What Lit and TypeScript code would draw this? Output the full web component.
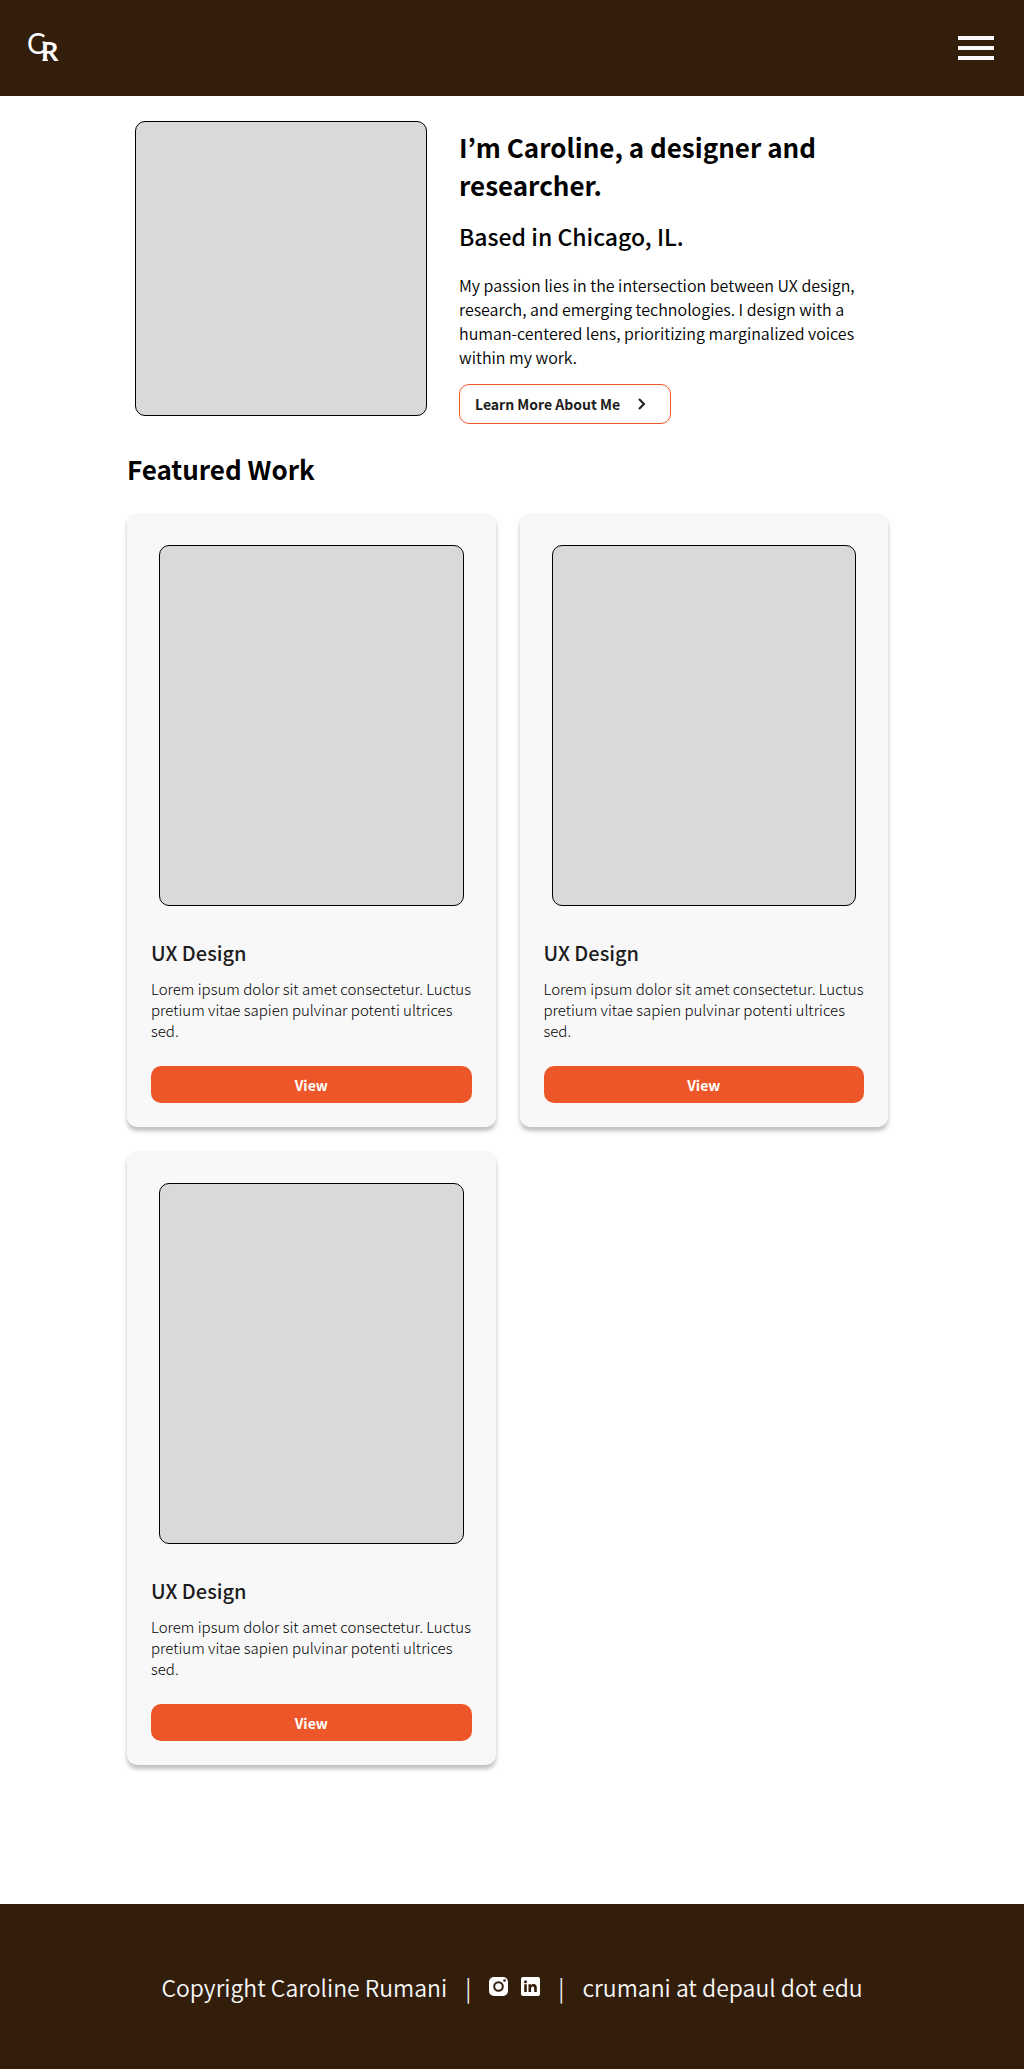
import { LitElement, html, css } from "lit";
import { customElement, property } from "lit/decorators.js";

@customElement("work-card")
class WorkCard extends LitElement {
  @property() heading = "";
  @property() summary = "";

  static styles = css`
    :host {
      display: block;
    }
    .card {
      display: flex;
      flex-direction: column;
      box-sizing: border-box;
      height: 100%;
      padding: 32px 24px 24px;
      background: #f8f8f8;
      border-radius: 10px;
      box-shadow: 0 4px 4px rgba(0, 0, 0, 0.25);
    }
    .thumb {
      box-sizing: border-box;
      height: 361px;
      margin: 0 8px;
      background: #d9d9d9;
      border: 1px solid #000;
      border-radius: 10px;
    }
    .title {
      margin: 32px 0 0;
      color: #1c1c1c;
      font-size: 20px;
      font-weight: 500;
      line-height: 30px;
    }
    .summary {
      margin: 10px 0 25px;
      color: #000;
      font-size: 15px;
      font-weight: 300;
      line-height: 21px;
    }
    .view {
      height: 37px;
      margin-top: auto;
      padding: 0;
      border: 0;
      border-radius: 10px;
      background: #ed5628;
      color: #fff;
      font: inherit;
      font-size: 14px;
      font-weight: 700;
      cursor: pointer;
    }
  `;

  render() {
    return html`
      <article class="card">
        <div class="thumb"></div>
        <h3 class="title">${this.heading}</h3>
        <p class="summary">${this.summary}</p>
        <button class="view" type="button">View</button>
      </article>
    `;
  }
}

@customElement("app-root")
class AppRoot extends LitElement {
  private works = [1, 2, 3].map(() => ({
    heading: "UX Design",
    summary:
      "Lorem ipsum dolor sit amet consectetur. Luctus pretium vitae sapien pulvinar potenti ultrices sed.",
  }));

  static styles = css`
    :host {
      display: flex;
      flex-direction: column;
      min-height: 100vh;
      background: #fff;
      color: #000;
      font-family: "Noto Sans CJK KR", "Noto Sans", sans-serif;
    }
    .top {
      display: flex;
      align-items: center;
      justify-content: space-between;
      box-sizing: border-box;
      min-height: 96px;
      padding: 0 28px 0 24px;
      background: #331e0c;
    }
    .home,
    .social {
      display: block;
    }
    .home svg,
    .social svg {
      display: block;
    }
    .menu {
      display: flex;
      flex-direction: column;
      gap: 6px;
      padding: 0;
      margin-right: 2px;
      border: 0;
      background: none;
      cursor: pointer;
    }
    .bar {
      width: 36px;
      height: 4px;
      background: #f8f8f8;
    }
    .main {
      flex: 1;
      padding: 25px 136px 48px 127px;
    }
    .intro {
      display: grid;
      grid-template-columns: 292px 1fr;
      column-gap: 32px;
      padding: 0 8px;
    }
    .portrait {
      box-sizing: border-box;
      height: 295px;
      background: #d9d9d9;
      border: 1px solid #000;
      border-radius: 10px;
    }
    .about {
      display: flex;
      flex-direction: column;
      align-items: flex-start;
      padding-top: 7px;
    }
    .name,
    .section {
      margin: 0;
      font-size: 26px;
      font-weight: 700;
      line-height: 38px;
    }
    .place {
      margin: 16px 0 0;
      font-size: 23px;
      font-weight: 500;
      line-height: 32px;
    }
    .bio {
      margin: 21px 0 0;
      font-size: 16px;
      font-weight: 350;
      line-height: 24px;
    }
    .more {
      display: flex;
      align-items: center;
      gap: 18px;
      box-sizing: border-box;
      height: 40px;
      margin-top: 15px;
      padding: 0 24px 0 15px;
      border: 1px solid #ed5628;
      border-radius: 10px;
      color: #1c1c1c;
      font-size: 14px;
      font-weight: 700;
      text-decoration: none;
    }
    .section {
      margin: 26px 0 25px;
    }
    .works {
      display: grid;
      grid-template-columns: 1fr 1fr;
      gap: 24px;
    }
    .foot {
      display: flex;
      align-items: center;
      justify-content: center;
      gap: 18px;
      box-sizing: border-box;
      min-height: 165px;
      background: #331e0c;
      color: #f8f8f8;
      font-size: 23px;
      font-weight: 350;
      line-height: 36px;
    }
    .socials {
      display: flex;
      gap: 13px;
    }
  `;

  render() {
    return html`
      <header class="top">
        <a class="home" href="#" aria-label="Home">
          <svg width="40" height="48" viewBox="0 0 40 48" fill="#fff">
            <text x="3" y="30" font-family="Lato" font-weight="400" font-size="28">C</text>
            <text x="17" y="37" font-family="Lato" font-weight="700" font-size="27">R</text>
            <path d="M18.500 17.600h3v1.500h-3zM18.500 35.500h5.500v1.500h-5.500zM30 35.500h3.500v1.500h-3.500z" />
          </svg>
        </a>
        <button class="menu" type="button" aria-label="Menu">
          <span class="bar"></span><span class="bar"></span><span class="bar"></span>
        </button>
      </header>

      <main class="main">
        <section class="intro">
          <div class="portrait"></div>
          <div class="about">
            <h1 class="name">I’m Caroline, a designer and researcher.</h1>
            <p class="place">Based in Chicago, IL.</p>
            <p class="bio">
              My passion lies in the intersection between UX design, research, and emerging
              technologies. I design with a human-centered lens, prioritizing marginalized voices
              within my work.
            </p>
            <a class="more" href="#about">
              Learn More About Me
              <svg width="8" height="12" viewBox="0 0 8 12" fill="none" stroke="#1c1c1c" stroke-width="2">
                <path d="M1 1l5 5-5 5" />
              </svg>
            </a>
          </div>
        </section>

        <h2 class="section">Featured Work</h2>
        <div class="works">
          ${this.works.map(
            (w) => html`<work-card .heading=${w.heading} .summary=${w.summary}></work-card>`,
          )}
        </div>
      </main>

      <footer class="foot">
        <span>Copyright Caroline Rumani</span>
        <span>|</span>
        <div class="socials">
          <a class="social" href="#instagram" aria-label="Instagram">
            <svg width="19" height="19" viewBox="0 0 19 19">
              <rect width="19" height="19" rx="5" fill="#fff" />
              <circle cx="9.5" cy="9.5" r="4.3" fill="none" stroke="#331e0c" stroke-width="2" />
              <circle cx="15.5" cy="3.5" r="1.3" fill="#331e0c" />
            </svg>
          </a>
          <a class="social" href="#linkedin" aria-label="LinkedIn">
            <svg width="19" height="19" viewBox="0 0 19 19">
              <rect width="19" height="19" rx="2" fill="#fff" />
              <circle cx="4.5" cy="4.7" r="1.5" fill="#331e0c" />
              <path
                d="M3.2 7.3h2.6v7.7H3.2zM7.5 7.3H10v1.1c.5-.8 1.300-1.300 2.500-1.300 2.500 0 3.300 1.500 3.300 3.800V15h-2.600v-3.700c0-1.100-.3-1.900-1.400-1.900-1.200 0-1.700.8-1.700 1.900V15H7.500z"
                fill="#331e0c"
              />
            </svg>
          </a>
        </div>
        <span>|</span>
        <span>crumani at depaul dot edu</span>
      </footer>
    `;
  }
}
